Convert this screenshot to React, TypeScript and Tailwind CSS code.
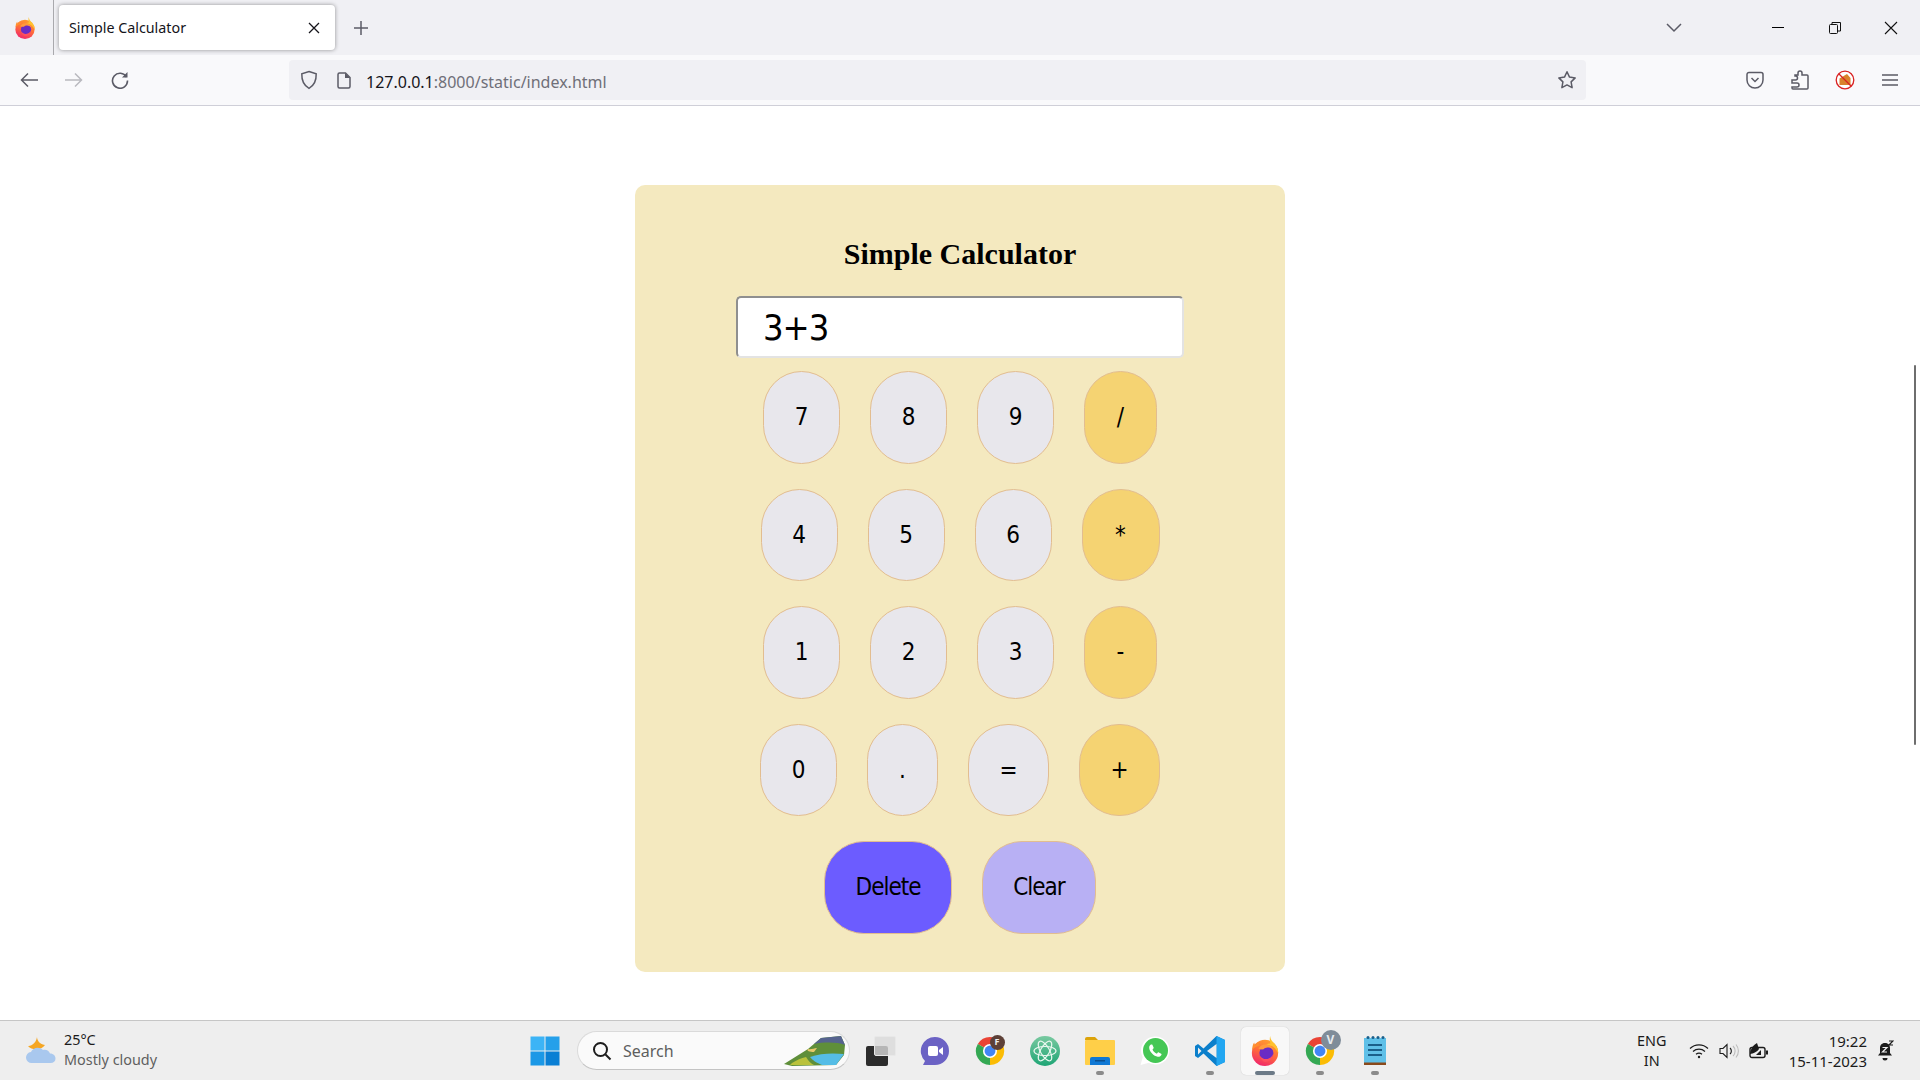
import { ReactNode } from "react";

const ui = "font-['Noto_Sans','Open_Sans',sans-serif]";
const calc = "font-['DejaVu_Sans_Condensed','DejaVu_Sans',sans-serif] font-stretch-condensed";

const keys = [
  [
    { label: "7", w: "w-[77px]" },
    { label: "8", w: "w-[77px]" },
    { label: "9", w: "w-[77px]" },
    { label: "/", w: "w-[73px]", op: true },
  ],
  [
    { label: "4", w: "w-[77px]" },
    { label: "5", w: "w-[77px]" },
    { label: "6", w: "w-[77px]" },
    { label: "*", w: "w-[78px]", op: true },
  ],
  [
    { label: "1", w: "w-[77px]" },
    { label: "2", w: "w-[77px]" },
    { label: "3", w: "w-[77px]" },
    { label: "-", w: "w-[73px]", op: true },
  ],
  [
    { label: "0", w: "w-[77px]" },
    { label: ".", w: "w-[71px]" },
    { label: "=", w: "w-[81px]" },
    { label: "+", w: "w-[81px]", op: true },
  ],
];

function Firefox({ size }: { size: number }) {
  return (
    <svg width={size} height={size} viewBox="0 0 32 32">
      <defs>
        <linearGradient id={`ff${size}`} x1="0.7" y1="0" x2="0.3" y2="1">
          <stop offset="0" stopColor="#ffa02e" />
          <stop offset="0.5" stopColor="#ff6b3a" />
          <stop offset="1" stopColor="#f0246e" />
        </linearGradient>
      </defs>
      <circle cx="16" cy="18" r="14" fill={`url(#ff${size})`} />
      <path d="M21.500 0c.3 3.500 1.800 5.300 4 7.500 3 3 5 6.500 4.500 11-2-5-5.500-8.500-13-9.500 2-.8 3.500-1 4.800-.8C21 5.500 20.800 2.800 21.500 0z" fill="#ffc22e" />
      <path d="M2.500 15c-.3-3 .5-6 2-8 .2 1.400.7 2.300 1.500 3 .4-1.500 1.500-3 3-4-.2 1.800.3 3 1.500 4-3.500 1-6.500 2.500-8 5z" fill="#ff8f2e" />
      <circle cx="17.500" cy="18" r="7.500" fill="#6a2bc4" />
      <path d="M9 13.500c1.500-3 5-4.800 8.800-4.300 3.800.5 6.500 3 7.200 6-1.800-2.200-4.700-3.400-7.500-2.800-1.500.3-2.500.8-3 1.800-2 .4-4-.1-5.500-.7z" fill="#ff9a3c" />
      <path d="M10.500 21c2 3 6 4.500 9.500 3 2.200-1 3.800-2.500 4.500-4.500.2 4.500-3 8-8 8-2.600 0-5-2.800-6-6.500z" fill="#ff4f5e" />
    </svg>
  );
}

function Chrome({ badge, large }: { badge: string; large?: boolean }) {
  return (
    <div className="relative w-[30px] h-[30px]">
      <svg width="30" height="30" viewBox="0 0 32 32">
        <path d="M16 16L3 8.500A15 15 0 0 1 29 8.500Z" fill="#ea4335" />
        <path d="M16 16L29 8.500A15 15 0 0 1 16 31Z" fill="#fbbc04" />
        <path d="M16 16L16 31A15 15 0 0 1 3 8.500Z" fill="#34a853" />
        <circle cx="16" cy="16" r="7.500" fill="#fff" />
        <circle cx="16" cy="16" r="5.800" fill="#4285f4" />
      </svg>
      {large ? (
        <span className="absolute -top-[6px] -right-[6px] w-[20px] h-[20px] rounded-full bg-[#7f8c99] text-[#e6eaee] text-[12px] font-bold flex items-center justify-center">
          {badge}
        </span>
      ) : (
        <span className="absolute -top-[1px] -right-0 w-[15px] h-[15px] rounded-full bg-[#5d4037] text-[#eee] text-[9px] font-bold flex items-center justify-center">
          {badge}
        </span>
      )}
    </div>
  );
}

function TaskSlot({ children, dot, active }: { children: ReactNode; dot?: boolean; active?: boolean }) {
  return (
    <div className="relative w-[55px] h-[48px] flex items-center justify-center">
      {active && <div className="absolute left-[3.500px] top-0 w-[48px] h-[48px] rounded-[5px] bg-[#f8f8f8] shadow-[0_0_1px_#bbb]" />}
      <div className="relative">{children}</div>
      {dot && <div className="absolute left-[23.500px] bottom-0 w-[8px] h-[4px] rounded-full bg-[#8b8b8b]" />}
      {active && <div className="absolute left-[17.500px] bottom-0 w-[20px] h-[4px] rounded-full bg-[#6c7a87]" />}
    </div>
  );
}

function Key({ label, w, op }: { label: string; w: string; op?: boolean }) {
  return (
    <button
      className={`${w} h-[92.500px] rounded-[40px] border border-[#e2bd90] text-[24px] text-black ${calc} ${
        op ? "bg-[#f5d372]" : "bg-[#e8e7ec]"
      }`}
    >
      {label}
    </button>
  );
}

export default function App() {
  return (
    <div className={`h-screen w-full flex flex-col overflow-hidden bg-white relative ${ui}`}>
      {/* tab strip */}
      <div className="h-[55px] bg-[#f0f0f4] flex items-start shrink-0">
        <div className="w-[54px] h-[55px] border-r border-[#a9a9ad] flex items-center justify-center pr-[4px]">
          <Firefox size={22} />
        </div>
        <div className="ml-[5px] mt-[5px] w-[276px] h-[45px] bg-white rounded-[4px] shadow-[0_0_4px_rgba(0,0,0,0.4)] flex items-center pl-[10px] pr-[15px] justify-between">
          <span className="text-[14.300px] text-[#15141a]">Simple Calculator</span>
          <svg width="12" height="12" viewBox="0 0 12 12" stroke="#15141a" strokeWidth="1.300">
            <path d="M1 1l10 10M11 1L1 11" />
          </svg>
        </div>
        <div className="ml-[18px] h-[55px] flex items-center">
          <svg width="16" height="16" viewBox="0 0 16 16" stroke="#5b5b66" strokeWidth="1.500">
            <path d="M8 1v14M1 8h14" />
          </svg>
        </div>
        <div className="ml-auto h-[55px] flex items-center">
          <svg width="16" height="10" viewBox="0 0 16 10" fill="none" stroke="#5b5b66" strokeWidth="1.500">
            <path d="M1 1l7 7 7-7" />
          </svg>
          <div className="ml-[90px] w-[12px] h-[1px] bg-black" />
          <svg className="ml-[45px]" width="12" height="14" viewBox="0 0 12 14" fill="none" stroke="#111" strokeWidth="1">
            <rect x="0.500" y="3.500" width="8" height="9" rx="1" />
            <path d="M3 3.500V1.500h8.500v8.500H8.500" />
          </svg>
          <svg className="ml-[43px] mr-[22px]" width="14" height="14" viewBox="0 0 14 14" stroke="#111" strokeWidth="1.100">
            <path d="M1 1l12 12M13 1L1 13" />
          </svg>
        </div>
      </div>

      {/* nav toolbar */}
      <div className="h-[51px] bg-[#f9f9fb] border-b border-[#cfcfd8] flex items-start shrink-0 pl-[6px]">
        <div className="h-[50px] w-[45px] flex items-center justify-center">
          <svg width="18" height="16" viewBox="0 0 18 16" fill="none" stroke="#5b5b66" strokeWidth="1.500">
            <path d="M18 8H1.500M8 1.500L1.500 8 8 14.500" />
          </svg>
        </div>
        <div className="h-[50px] w-[46px] flex items-center justify-center">
          <svg width="18" height="16" viewBox="0 0 18 16" fill="none" stroke="#b9b9bf" strokeWidth="1.500">
            <path d="M0 8h16.500M10 1.500L16.500 8 10 14.500" />
          </svg>
        </div>
        <div className="h-[50px] w-[45px] flex items-center justify-center">
          <svg width="18" height="18" viewBox="0 0 18 18" fill="none" stroke="#5b5b66" strokeWidth="1.600">
            <path d="M15.500 6A7.500 7.500 0 1 0 16.500 9.500" />
            <path d="M16.500 1v5.500H11" fill="#5b5b66" stroke="none" />
          </svg>
        </div>
        <div className="ml-[147px] mt-[5px] w-[1297px] h-[40px] bg-[#f0f0f4] rounded-[4px] flex items-center pl-[11px] pr-[9px]">
          <svg width="18" height="20" viewBox="0 0 18 20" fill="none" stroke="#5b5b66" strokeWidth="1.500">
            <path d="M9 1.500l7.200 2.300c.2 6.500-1.500 11.500-7.200 14.500C3.300 15.300 1.600 10.300 1.800 3.800z" />
          </svg>
          <svg className="ml-[19px]" width="14" height="17" viewBox="0 0 14 17" fill="none" stroke="#5b5b66" strokeWidth="1.500">
            <path d="M8.500 1H2.500A1.500 1.500 0 0 0 1 2.500v12A1.500 1.500 0 0 0 2.500 16h9a1.500 1.500 0 0 0 1.500-1.500V5.500z" />
            <path d="M8 1v5h5" fill="#5b5b66" stroke="none" />
          </svg>
          <span className="ml-[15px] mt-[3px] text-[16px] text-[#15141a]">
            127.0.0.1<span className="text-[#6f6f78]">:8000/static/index.html</span>
          </span>
          <svg className="ml-auto" width="20" height="20" viewBox="0 0 20 20" fill="none" stroke="#5b5b66" strokeWidth="1.500">
            <path d="M10 1.800l2.500 5.300 5.700.8-4.100 4 1 5.800-5.100-2.800-5.100 2.800 1-5.800-4.100-4 5.700-.8z" strokeLinejoin="round" />
          </svg>
        </div>
        <div className="ml-[160px] h-[50px] flex items-center">
          <svg width="18" height="18" viewBox="0 0 18 18" fill="none" stroke="#5b5b66" strokeWidth="1.500">
            <path d="M1 3.500A2 2 0 0 1 3 1.500h12a2 2 0 0 1 2 2V9A8 8 0 0 1 1 9z" />
            <path d="M5.500 7L9 10.500 12.500 7" />
          </svg>
          <svg className="ml-[27px]" width="18" height="20" viewBox="0 0 18 20" fill="none" stroke="#5b5b66" strokeWidth="1.500">
            <path d="M1 10h3.500a2 2 0 0 0 0-4H4V5h3V3a2 2 0 0 1 4 0v2h5a1 1 0 0 1 1 1v12a1 1 0 0 1-1 1H2a1 1 0 0 1-1-1v-1h5a2 2 0 0 0 0-4H1z" />
          </svg>
          <svg className="ml-[26px]" width="20" height="20" viewBox="0 0 20 20">
            <circle cx="10" cy="10" r="9" fill="#fff" />
            <path d="M4.500 8.500L12 4l3.500 4v7h-11z" fill="#d9822b" />
            <circle cx="10" cy="10" r="8.800" fill="none" stroke="#d92121" strokeWidth="1.300" />
            <path d="M4 4l12 12" stroke="#d92121" strokeWidth="1.300" />
          </svg>
          <svg className="ml-[27px]" width="16" height="14" viewBox="0 0 16 14" stroke="#5b5b66" strokeWidth="1.500">
            <path d="M0 2h16M0 7h16M0 12h16" />
          </svg>
        </div>
      </div>

      {/* page */}
      <div className="flex-1 pt-[79px] flex justify-center">
        <div className="w-[650px] h-[787px] bg-[#f4e9bf] rounded-[10px] flex flex-col items-center pt-[50px]">
          <h1 className="font-['Liberation_Serif',serif] font-bold text-[30px] leading-[38px] text-black">Simple Calculator</h1>
          <div className={`mt-[23px] w-[448px] h-[62px] bg-white rounded-[5px] border-2 border-t-[#8f8f8f] border-l-[#8f8f8f] border-r-[#e3e3e3] border-b-[#e3e3e3] flex items-center pl-[25px] pt-[2px] text-[36px] tracking-[-1px] text-black ${calc}`}>
            3+3
          </div>
          <div className="mt-[13px] flex flex-col gap-[25px]">
            {keys.map((row, i) => (
              <div key={i} className="flex justify-center gap-[30px]">
                {row.map((k) => (
                  <Key key={k.label} label={k.label} w={k.w} op={k.op} />
                ))}
              </div>
            ))}
            <div className="flex justify-center gap-[30px]">
              <button className={`w-[128px] h-[92.500px] rounded-[40px] border border-[#e2bd90] bg-[#6c5cff] text-[24px] tracking-[-1px] text-black ${calc}`}>Delete</button>
              <button className={`w-[114px] h-[92.500px] rounded-[40px] border border-[#e2bd90] bg-[#b8b0f4] text-[24px] tracking-[-1px] text-black ${calc}`}>Clear</button>
            </div>
          </div>
        </div>
      </div>

      {/* page scrollbar */}
      <div className="absolute right-[4px] top-[365px] w-[2px] h-[380px] bg-[#6e6e6e] rounded-full" />

      {/* taskbar */}
      <div className="h-[60px] bg-[#eeeeee] border-t border-[#c6c6c6] flex items-center shrink-0 text-[14.400px] text-[#1b1b1b]">
        <div className="w-[530px] flex items-center pl-[24px]">
          <svg width="34" height="32" viewBox="0 0 34 32">
            <path d="M13 0c-.5 5 2 9 8 10-3 5-13 6-17 1 3.500.5 9.500-4 9-11z" fill="#f5a623" />
            <path d="M8 28a5.500 5.500 0 0 1-1-11c1.500-4 8-6 12-2 3-1 6 .5 7 3.500 3.500 0 5.500 2.500 5.500 5 0 2.800-2 4.500-5 4.500z" fill="#a9c8ee" />
          </svg>
          <div className="ml-[6px] leading-[20px] -mt-[2px]">
            <div>25°C</div>
            <div className="text-[#5f5f5f]">Mostly cloudy</div>
          </div>
        </div>

        <div className="flex items-center">
          <svg width="30" height="30" viewBox="0 0 30 30">
            <rect x="0.500" y="0.500" width="14" height="14" fill="#3cb4f6" />
            <rect x="15.500" y="0.500" width="14" height="14" fill="#25a0ea" />
            <rect x="0.500" y="15.500" width="14" height="14" fill="#1b98e6" />
            <rect x="15.500" y="15.500" width="14" height="14" fill="#0a7fd4" />
          </svg>
          <div className="ml-[17px] w-[273px] h-[39px] rounded-full bg-[#fafafa] border border-[#dadada] border-b-[#c4c4c4] flex items-center pl-[14px] pr-[3px] overflow-hidden">
            <svg width="20" height="20" viewBox="0 0 20 20" fill="none" stroke="#1d1d1d" strokeWidth="2">
              <circle cx="8.500" cy="8.500" r="6.500" />
              <path d="M13.500 13.500L18.500 18.500" />
            </svg>
            <span className="ml-[11px] text-[16px] text-[#5e5e5e]">Search</span>
            <svg className="ml-auto" width="62" height="31" viewBox="0 0 62 31">
              <path d="M0 29l24-15L37 3l20-2 4 9-1 10-8 10-44 1z" fill="#5f8f3a" />
              <path d="M30 9l7-6 20-2 4 9c-8-3-20-3-31-1z" fill="#56648f" />
              <path d="M24 14c3 1 6-1 9-1l-3 4c-4 0-8-1-6-3z" fill="#e8c86a" />
              <path d="M26 22c10-4 24-4 34-3l-8 11H38c-5-2-10-5-12-8z" fill="#55bde6" />
              <path d="M8 28c5-3 9-5 14-6 2 3 3 5 8 8H6z" fill="#b9c23c" />
            </svg>
          </div>
          <div className="ml-[16px] relative w-[30px] h-[30px]">
            <div className="absolute left-0 bottom-0 w-[22px] h-[20px] bg-[#2c2c2c] rounded-[2px]" />
            <div className="absolute right-0 top-0 w-[22px] h-[20px] bg-[#d9d9d9]/80 rounded-[2px] border border-[#e8e8e8]" />
          </div>
          <div className="ml-[11px] flex items-center">
            <TaskSlot>
              <svg width="30" height="30" viewBox="0 0 30 30">
                <path d="M15 1a14 14 0 0 1 0 28H3l2-4A14 14 0 0 1 15 1z" fill="#6b62c4" />
                <rect x="8" y="10" width="10" height="10" rx="2" fill="#fff" />
                <path d="M19 14l4-3v8l-4-3z" fill="#fff" />
              </svg>
            </TaskSlot>
            <TaskSlot>
              <Chrome badge="F" />
            </TaskSlot>
            <TaskSlot>
              <svg width="30" height="30" viewBox="0 0 30 30">
                <defs>
                  <linearGradient id="atom" x1="0" y1="0" x2="0" y2="1">
                    <stop offset="0" stopColor="#79c9a0" />
                    <stop offset="1" stopColor="#1ea575" />
                  </linearGradient>
                </defs>
                <circle cx="15" cy="15" r="15" fill="url(#atom)" />
                <g fill="none" stroke="#e9f7ef" strokeWidth="1.200">
                  <ellipse cx="15" cy="15" rx="11" ry="4.500" />
                  <ellipse cx="15" cy="15" rx="11" ry="4.500" transform="rotate(60 15 15)" />
                  <ellipse cx="15" cy="15" rx="11" ry="4.500" transform="rotate(120 15 15)" />
                </g>
              </svg>
            </TaskSlot>
            <TaskSlot dot>
              <svg width="30" height="28" viewBox="0 0 30 28">
                <path d="M0 2a2 2 0 0 1 2-2h8l3 3h-13z" fill="#dca30a" />
                <rect x="0" y="3" width="30" height="25" rx="1" fill="#ffcf48" />
                <path d="M5 28v-6a2 2 0 0 1 2-2h16a2 2 0 0 1 2 2v6z" fill="#0f78d4" />
                <rect x="10" y="23" width="10" height="1.500" fill="#0b4f8f" />
              </svg>
            </TaskSlot>
            <TaskSlot>
              <svg width="30" height="30" viewBox="0 0 30 30">
                <path d="M15.500 0.500a14 14 0 0 1 0 28c-2.400 0-4.700-.6-6.600-1.700L0.500 29l2.300-7.800a14 14 0 0 1 12.700-20.700z" fill="#fff" />
                <circle cx="15.500" cy="14.500" r="12.500" fill="#45c755" />
                <path d="M11 8.500c-1 .5-2 1.800-1.800 3.500.4 4 4.500 8 8.500 8.800 1.700.3 3.200-.7 3.800-2 .2-.5 0-.9-.3-1.100l-2.400-1.300c-.4-.2-.8-.1-1 .2l-.9 1.100c-2-.8-3.500-2.300-4.400-4.300l.9-1c.3-.3.3-.6.200-1l-1.100-2.500c-.2-.4-.6-.5-1.500-.4z" fill="#fff" />
              </svg>
            </TaskSlot>
            <TaskSlot dot>
              <svg width="30" height="30" viewBox="0 0 30 30">
                <path d="M21.500 0L30 4v22l-8.500 4L8.500 17.500 3 22 0 20V10l3-2 5.500 4.500z" fill="#0b7fcb" />
                <path d="M21.500 0L30 4v22l-8.500 4z" fill="#22a6f1" />
                <path d="M21.500 8L12 15l9.500 7z" fill="#eeeeee" />
                <path d="M3 11.500v7L6.500 15z" fill="#eeeeee" />
              </svg>
            </TaskSlot>
            <TaskSlot active>
              <Firefox size={30} />
            </TaskSlot>
            <TaskSlot dot>
              <Chrome badge="V" large />
            </TaskSlot>
            <TaskSlot dot>
              <svg width="22" height="30" viewBox="0 0 22 30">
                <rect x="0" y="2" width="22" height="26" fill="#5fc0e8" />
                <rect x="0" y="26.500" width="22" height="2.500" fill="#8a4a1c" />
                <g fill="#1a5f8a">
                  <circle cx="4" cy="1.500" r="1.500" />
                  <circle cx="9" cy="1.500" r="1.500" />
                  <circle cx="14" cy="1.500" r="1.500" />
                  <circle cx="19" cy="1.500" r="1.500" />
                  <rect x="4" y="8" width="14" height="2" />
                  <rect x="4" y="13" width="14" height="2" />
                  <rect x="4" y="18" width="14" height="2" />
                </g>
              </svg>
            </TaskSlot>
          </div>
        </div>

        <div className="ml-auto flex items-center pr-[26px]">
          <div className="w-[40px] text-center leading-[20px]">
            <div>ENG</div>
            <div>IN</div>
          </div>
          <svg className="ml-[17px]" width="20" height="16" viewBox="0 0 20 16" fill="none" stroke="#1b1b1b" strokeWidth="1.200">
            <path d="M1 5.500a13 13 0 0 1 18 0M4 8.500a9 9 0 0 1 12 0M7 11.200a5 5 0 0 1 6 0" />
            <circle cx="10" cy="14" r="1.200" fill="#1b1b1b" stroke="none" />
          </svg>
          <svg className="ml-[10px]" width="20" height="16" viewBox="0 0 20 16" fill="none" stroke="#1b1b1b" strokeWidth="1.100">
            <path d="M1 5.500h3l4-4v13l-4-4H1z" />
            <path d="M11 5a4 4 0 0 1 0 6" />
            <path d="M14 3a7 7 0 0 1 0 10M17 1.500a10 10 0 0 1 0 13" stroke="#bcbcbc" />
          </svg>
          <svg className="ml-[10px]" width="20" height="18" viewBox="0 0 20 18">
            <rect x="1" y="5.500" width="15" height="10" rx="2" fill="none" stroke="#1b1b1b" strokeWidth="1.400" />
            <path d="M1 12c3 0 8-3 9-5l-2-6C4 3 1 8 1 12z" fill="#1b1b1b" />
            <rect x="17" y="8.500" width="2" height="4" fill="#1b1b1b" />
            <path d="M7 13l5-5v5z" fill="#1b1b1b" />
          </svg>
          <div className="ml-[20px] text-right leading-[20px] text-[15px]">
            <div>19:22</div>
            <div>15-11-2023</div>
          </div>
          <svg className="ml-[10px]" width="17" height="22" viewBox="0 0 17 22">
            <path d="M8 3c3.500 0 5 2.500 5 5v5l2 2.500H1L3 13V8c0-2.500 1.500-5 5-5z" fill="#1b1b1b" />
            <path d="M5.500 18h5a2.500 2.500 0 0 1-5 0z" fill="#1b1b1b" />
            <path d="M5.500 7.500h4.500L5.500 12H10" fill="none" stroke="#eee" strokeWidth="1.200" />
            <path d="M12 1h4l-4 4h4" fill="none" stroke="#1b1b1b" strokeWidth="1.200" />
          </svg>
        </div>
      </div>
    </div>
  );
}
